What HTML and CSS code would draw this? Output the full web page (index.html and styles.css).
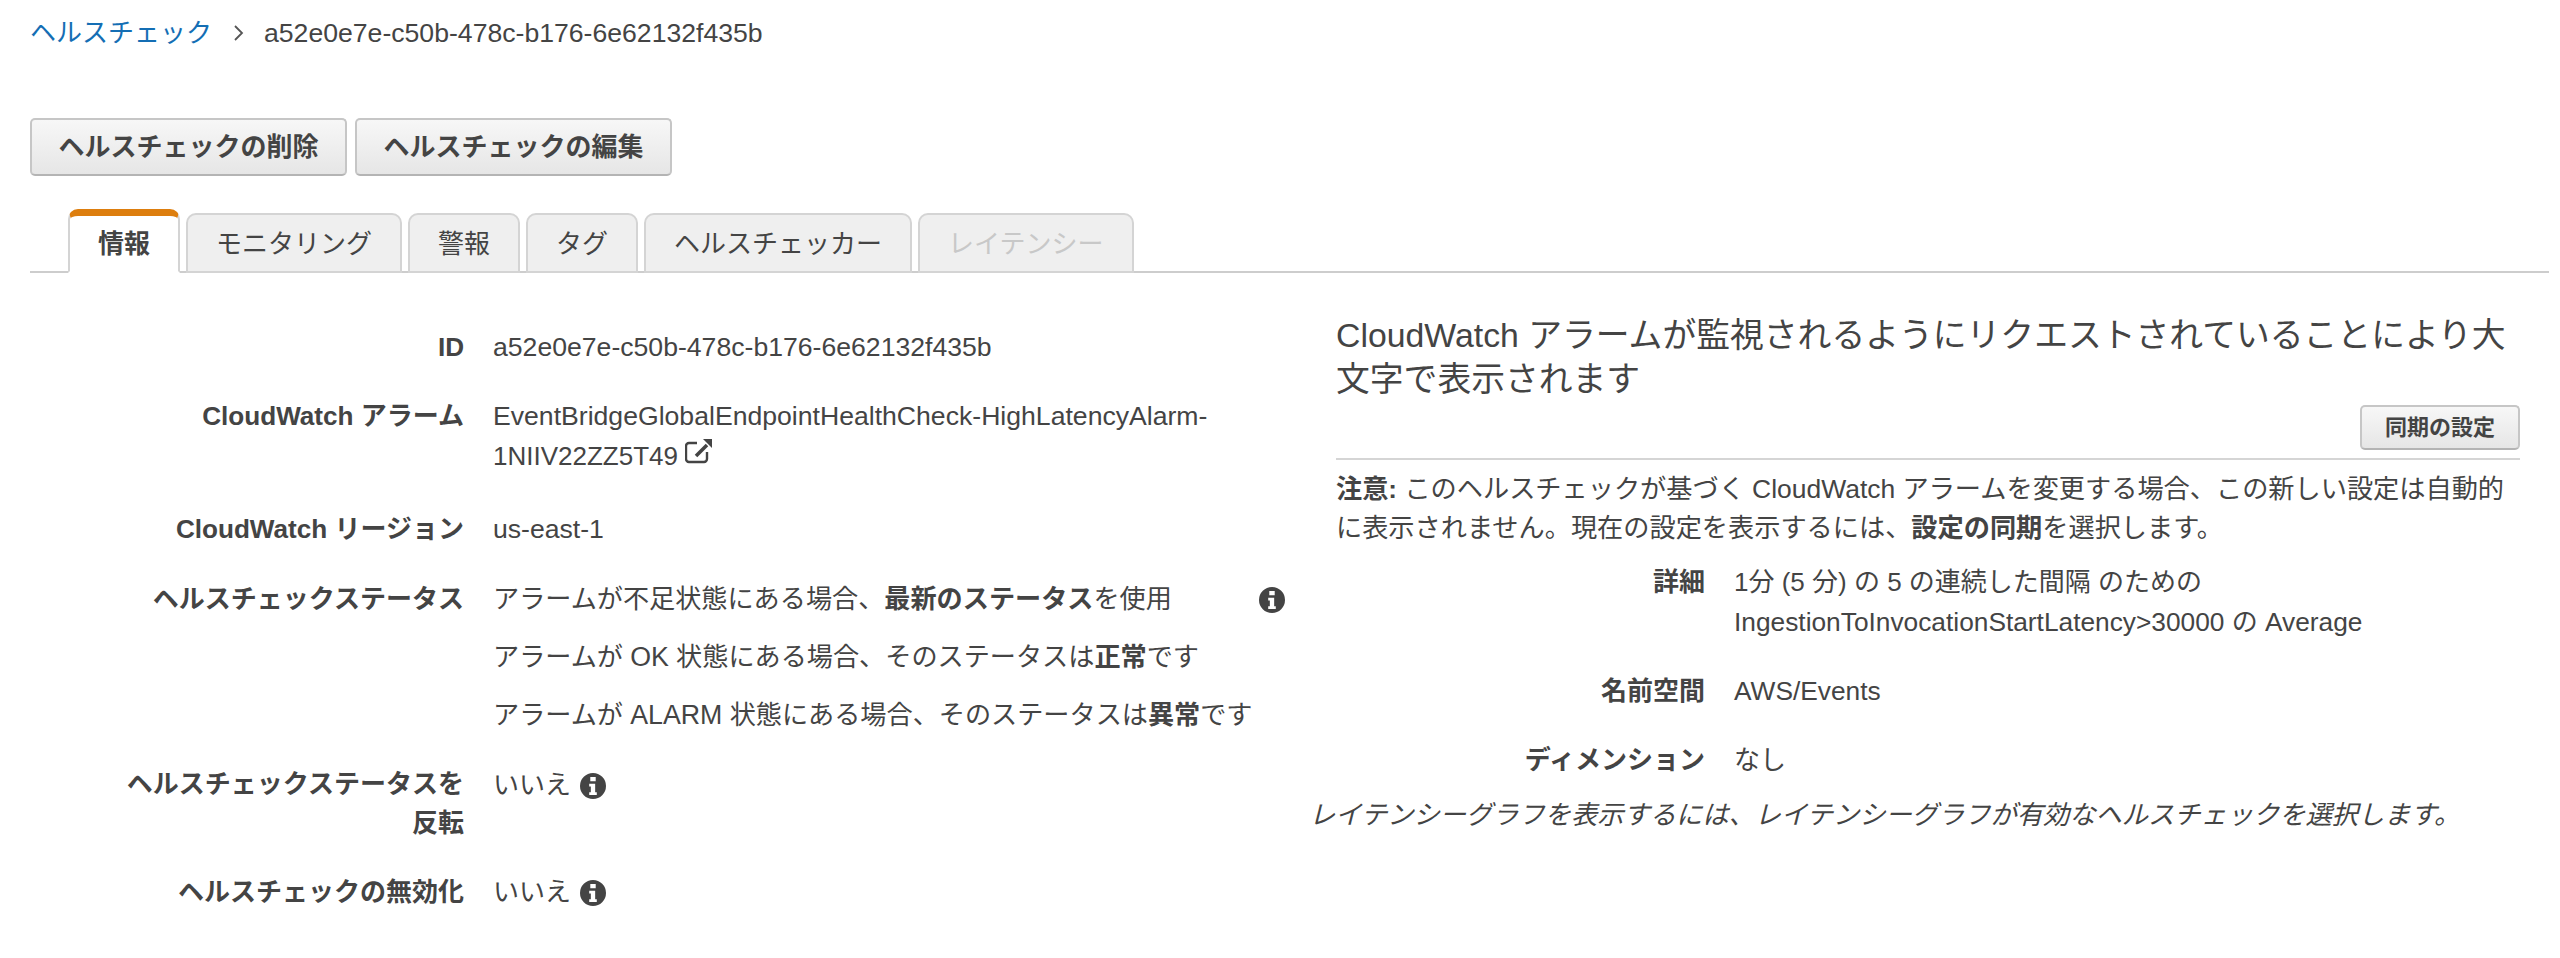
FILE: index.html
```html
<!DOCTYPE html>
<html lang="ja">
<head>
<meta charset="utf-8">
<title>ヘルスチェック</title>
<link rel="stylesheet" href="styles.css">
</head>
<body>
<nav class="crumbs"><a class="crumb-link">ヘルスチェック</a>
<svg class="crumb-sep" width="12" height="20" viewBox="0 0 12 20"><path d="M2 3l7 7-7 7" fill="none" stroke="#555" stroke-width="1.8"/></svg>
<span class="en">a52e0e7e-c50b-478c-b176-6e62132f435b</span></nav>
<div class="actions"><button class="btn">ヘルスチェックの削除</button><button class="btn">ヘルスチェックの編集</button></div>
<div class="tabs">
<div class="tab active">情報</div><div class="tab">モニタリング</div><div class="tab">警報</div><div class="tab">タグ</div><div class="tab">ヘルスチェッカー</div><div class="tab disabled">レイテンシー</div>
</div>
<main class="panes">
<section class="left">
<div class="row r-id"><div class="label"><span class="en">ID</span></div><div class="value"><span class="en">a52e0e7e-c50b-478c-b176-6e62132f435b</span></div></div>
<div class="row r-alarm"><div class="label"><span class="en">CloudWatch</span> アラーム</div><div class="value alarm"><span class="en">EventBridgeGlobalEndpointHealthCheck-HighLatencyAlarm-</span><br><span class="alarm-tail">1NIIV22ZZ5T49</span> <svg class="ext" width="28" height="26" viewBox="0 0 28 26"><path d="M12 5H4a3 3 0 0 0-3 3v13a3 3 0 0 0 3 3h15a3 3 0 0 0 3-3v-7" fill="none" stroke="#444" stroke-width="2.400"/><path d="M11 18L22 7" fill="none" stroke="#444" stroke-width="3.600"/><path d="M18 1h9v9z" fill="#444"/></svg></div></div>
<div class="row r-region"><div class="label"><span class="en">CloudWatch</span> リージョン</div><div class="value"><span class="en">us-east-1</span></div></div>
<div class="row r-status"><div class="label">ヘルスチェックステータス</div>
<div class="value status">
<div class="status-line first">アラームが不足状態にある場合、<b>最新のステータス</b>を使用<svg class="info info-far" viewBox="0 0 24 24"><use href="#i"/></svg></div>
<div class="status-line">アラームが <span class="en">OK</span> 状態にある場合、そのステータスは<b>正常</b>です</div>
<div class="status-line">アラームが <span class="en">ALARM</span> 状態にある場合、そのステータスは<b>異常</b>です</div>
</div></div>
<div class="row r-invert"><div class="label">ヘルスチェックステータスを<br>反転</div><div class="value">いいえ <svg class="info" viewBox="0 0 24 24"><use href="#i"/></svg></div></div>
<div class="row r-disable"><div class="label">ヘルスチェックの無効化</div><div class="value">いいえ <svg class="info" viewBox="0 0 24 24"><use href="#i"/></svg></div></div>
</section>
<section class="right">
<h2 class="title"><span class="en">CloudWatch</span> アラームが監視されるようにリクエストされていることにより大文字で表示されます</h2>
<div class="sync"><button class="btn small">同期の設定</button></div>
<p class="note"><b>注意:</b> このヘルスチェックが基づく <span class="en">CloudWatch</span> アラームを変更する場合、この新しい設定は自動的に表示されません。現在の設定を表示するには、<b>設定の同期</b>を選択します。</p>
<div class="rrow r-detail"><div class="rlabel">詳細</div><div class="rvalue">1分 (5 分) の 5 の連続した間隔 のための<br><span class="en">IngestionToInvocationStartLatency&gt;30000</span> の <span class="en">Average</span></div></div>
<div class="rrow"><div class="rlabel">名前空間</div><div class="rvalue"><span class="en">AWS/Events</span></div></div>
<div class="rrow"><div class="rlabel">ディメンション</div><div class="rvalue">なし</div></div>
<p class="hint">レイテンシーグラフを表示するには、レイテンシーグラフが有効なヘルスチェックを選択します。</p>
</section>
</main>
<svg class="defs" width="0" height="0"><symbol id="i" viewBox="0 0 24 24"><path fill-rule="evenodd" d="M12 0a12 12 0 1 1 0 24a12 12 0 0 1 0-24zM9.500 3.800v3.800h5v-3.800zM8.500 10v2.400h1.500v5.400H8.500v2.400h7v-2.400H14V10z" fill="#444"/></symbol></svg>
</body>
</html>
```
FILE: styles.css
```css
* { box-sizing: border-box; }
html, body { margin: 0; padding: 0; background: #fff; }
body {
  font-family: "Liberation Sans", "Noto Sans CJK JP", sans-serif;
  font-size: 26px;
  line-height: 40px;
  color: #444;
  height: 958px;
  overflow: hidden;
}
b { font-weight: 700; }
.en { font-size: 1.024em; line-height: 1; }
.defs { position: absolute; }
.crumbs { display: flex; align-items: center; height: 40px; margin: 13px 0 0 30px; }
.crumb-link { color: #146eb4; }
.crumb-sep { margin: 0 19px 0 21px; }
.actions { display: flex; gap: 8px; margin: 65px 0 0 30px; }
.btn {
  font: 700 26px/1 "Liberation Sans", "Noto Sans CJK JP", sans-serif;
  color: #444;
  height: 58px;
  width: 317px;
  padding: 0;
  border: 2px solid #c6c6c6;
  border-bottom-color: #b4b4b4;
  border-radius: 5px;
  background: linear-gradient(#f7f7f7, #e6e6e6);
}
.tabs {
  display: flex;
  align-items: flex-end;
  gap: 6px;
  height: 64px;
  margin: 33px 11px 0 30px;
  padding-left: 38px;
  border-bottom: 2px solid #cdcdcd;
}
.tab {
  height: 60px;
  margin-bottom: -2px;
  padding: 0 28px;
  line-height: 58px;
  background: #efefef;
  border: 2px solid #d4d4d4;
  border-radius: 10px 10px 0 0;
  white-space: nowrap;
}
.tab.active {
  height: 64px;
  line-height: 56px;
  font-weight: 700;
  background: #fff;
  border-top: 7px solid #dd7e0e;
  border-bottom-color: #fff;
}
.tab.disabled { color: #c8c8c8; }
.panes { display: flex; align-items: flex-start; }
.left { width: 1311px; flex: none; padding-top: 54px; }
.row { display: flex; gap: 29px; }
.label { width: 434px; margin-left: 30px; flex: none; text-align: right; font-weight: 700; }
.label .en { font-size: 1.005em; }
.value { flex: none; width: 790px; }
.alarm { width: 720px; }
.r-alarm { margin-top: 29px; }
.r-region { margin-top: 33px; }
.r-status { margin-top: 30px; }
.status-line { position: relative; font-size: 26.15px; }
.status-line + .status-line { margin-top: 18px; }
.r-invert { margin-top: 30px; }
.r-invert .label { line-height: 39px; }
.r-disable { margin-top: 29px; }
.info { width: 26px; height: 26px; margin-left: 2px; vertical-align: -5px; }
.info-far { position: absolute; left: 764px; top: 8px; }
.ext { vertical-align: 1px; }
.right { width: 1184px; margin: 0 0 0 25px; padding-top: 40px; }
.title { margin: 0; font-size: 33.8px; font-weight: 400; line-height: 44px; }
.title .en { font-size: 1em; }
.sync { display: flex; justify-content: flex-end; margin-top: 4px; padding-bottom: 8px; border-bottom: 2px solid #d5d5d5; }
.btn.small { width: 160px; height: 45px; font-size: 22px; }
.note { margin: 10px 0 0; font-size: 26.2px; line-height: 39px; }
.note .en { font-size: 1.01em; }
.rrow { display: flex; gap: 30px; margin-top: 29px; }
.r-detail { margin-top: 14px; }
.rlabel { width: 369px; flex: none; text-align: right; font-weight: 700; }
.rvalue { margin-left: -1px; }
.rvalue .en { font-size: 1.012em; }
.hint { margin: 15px 0 0 -27px; font-size: 26.25px; font-style: italic; white-space: nowrap; }
```
